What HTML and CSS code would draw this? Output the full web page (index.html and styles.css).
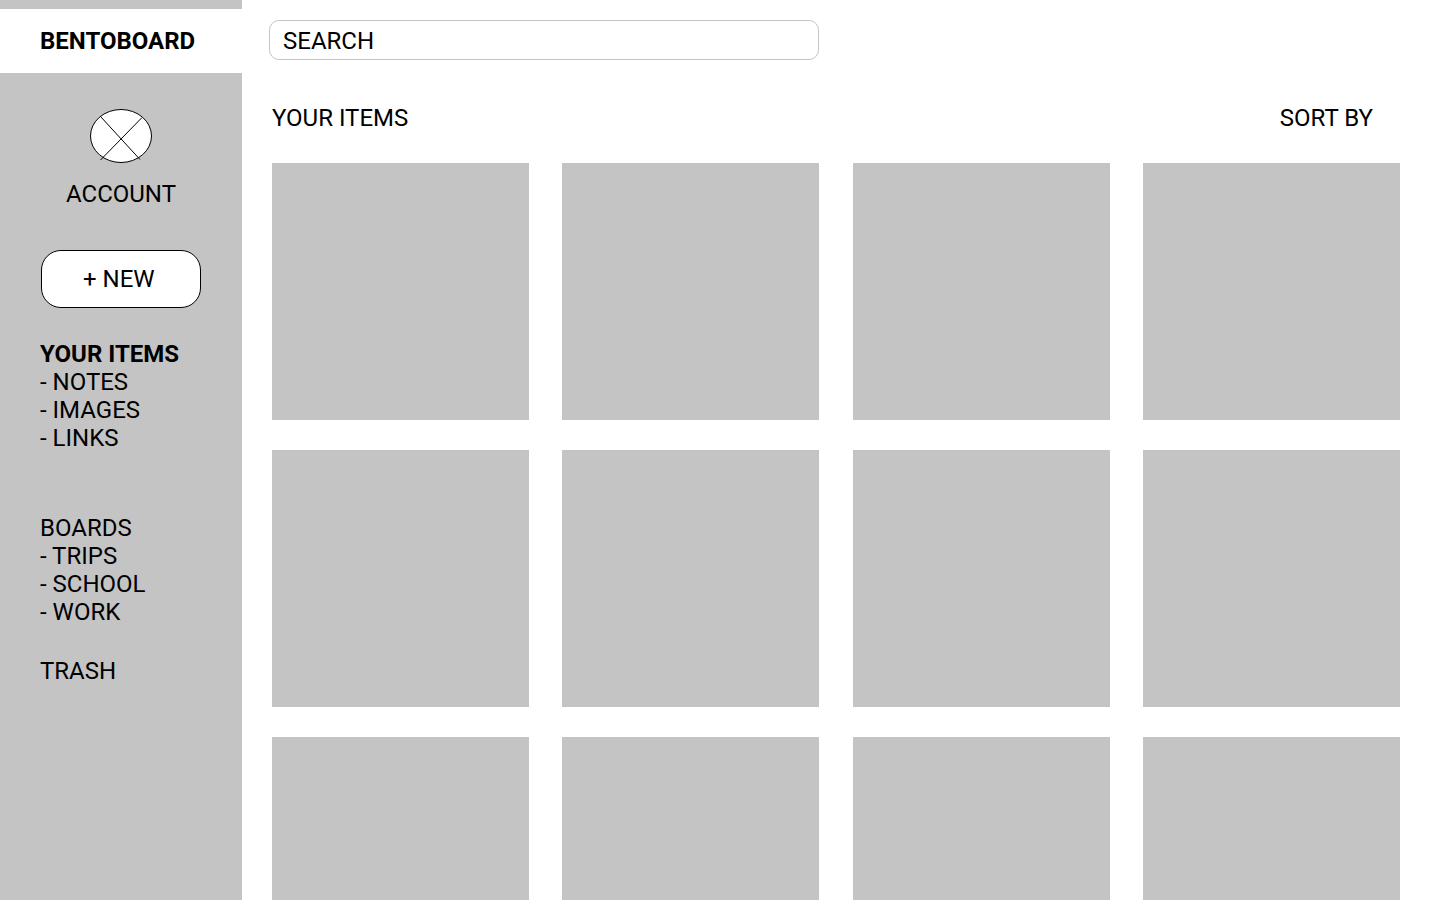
FILE: index.html
```html
<!DOCTYPE html>
<html lang="en">
<head>
<meta charset="utf-8">
<meta name="viewport" content="width=device-width, initial-scale=1">
<title>Bentoboard</title>
<link rel="stylesheet" href="styles.css">
</head>
<body class="app">
  <aside class="sidebar">
    <h1 class="brand">BENTOBOARD</h1>
    <a class="account" href="#account">
      <svg class="avatar" width="62" height="54" viewBox="0 0 62 54" aria-hidden="true">
        <ellipse cx="31" cy="27" rx="30.5" ry="26.5" fill="#fff" stroke="#000"/>
        <path d="M10.5 7.5 L50 50.5 M52 8.5 L10.5 51" fill="none" stroke="#000"/>
      </svg>
      <span>ACCOUNT</span>
    </a>
    <button class="new-button" type="button">+ NEW</button>
    <nav class="nav">
      <ul class="nav-group nav-items">
        <li><a class="current" href="#items">YOUR ITEMS</a></li>
        <li><a href="#notes">- NOTES</a></li>
        <li><a href="#images">- IMAGES</a></li>
        <li><a href="#links">- LINKS</a></li>
      </ul>
      <ul class="nav-group nav-boards">
        <li><a href="#boards">BOARDS</a></li>
        <li><a href="#trips">- TRIPS</a></li>
        <li><a href="#school">- SCHOOL</a></li>
        <li><a href="#work">- WORK</a></li>
      </ul>
      <a href="#trash">TRASH</a>
    </nav>
  </aside>
  <main class="content">
    <form class="search" role="search">
      <input class="search-input" type="search" aria-label="Search" placeholder="SEARCH">
    </form>
    <header class="toolbar">
      <h2 class="title">YOUR ITEMS</h2>
      <button class="sort" type="button">SORT BY</button>
    </header>
    <section class="tiles" aria-label="Your items">
      <article class="tile"></article>
      <article class="tile"></article>
      <article class="tile"></article>
      <article class="tile"></article>
      <article class="tile"></article>
      <article class="tile"></article>
      <article class="tile"></article>
      <article class="tile"></article>
      <article class="tile"></article>
      <article class="tile"></article>
      <article class="tile"></article>
      <article class="tile"></article>
    </section>
  </main>
</body>
</html>
```
FILE: styles.css
```css
* {
  box-sizing: border-box;
}

.app {
  display: flex;
  height: 100vh;
  margin: 0;
  background: #fff;
  color: #000;
  font: 400 24px/28px Roboto, sans-serif;
}

a {
  color: inherit;
  text-decoration: none;
}

button,
input {
  color: inherit;
  font: inherit;
}

.sidebar {
  display: flex;
  flex: none;
  flex-direction: column;
  width: 242px;
  padding-top: 9px;
  overflow-y: auto;
  scrollbar-width: none;
  background: #c4c4c4;
}

.brand {
  margin: 0;
  padding: 18px 40px;
  background: #fff;
  font-size: 24px;
  font-weight: 700;
}

.account {
  display: flex;
  flex-direction: column;
  align-items: center;
  gap: 17px;
  margin-top: 36px;
}

.avatar {
  display: block;
}

.new-button {
  margin: 42px 41px 0;
  padding: 14px 41px;
  border: 1px solid #000;
  border-radius: 20px;
  background: #fff;
  text-align: left;
  white-space: nowrap;
}

.nav {
  padding: 32px 40px;
}

.nav-group {
  margin: 0;
  padding: 0;
  list-style: none;
}

.nav-items {
  margin-bottom: 62px;
}

.nav-boards {
  margin-bottom: 31px;
}

.current {
  font-weight: 700;
}

.content {
  flex: 1;
  min-width: 0;
  padding: 20px 40px 30px 27px;
  overflow-y: auto;
  scrollbar-width: none;
}

.search-input {
  display: block;
  width: 100%;
  max-width: 550px;
  height: 40px;
  padding: 2px 13px 0;
  border: 1px solid #c4c4c4;
  border-radius: 10px;
  background: #fff;
  appearance: none;
}

.search-input::placeholder {
  color: #000;
  opacity: 1;
}

.toolbar {
  display: flex;
  justify-content: space-between;
  margin: 44px 27px 31px 3px;
}

.title {
  margin: 0;
  font-size: 24px;
  font-weight: 400;
}

.sort {
  padding: 0;
  border: 0;
  background: none;
}

.tiles {
  display: grid;
  grid-template-columns: repeat(auto-fill, 257px);
  justify-content: space-between;
  gap: 30px;
  margin-left: 3px;
}

.tile {
  aspect-ratio: 1;
  background: #c4c4c4;
}
```
